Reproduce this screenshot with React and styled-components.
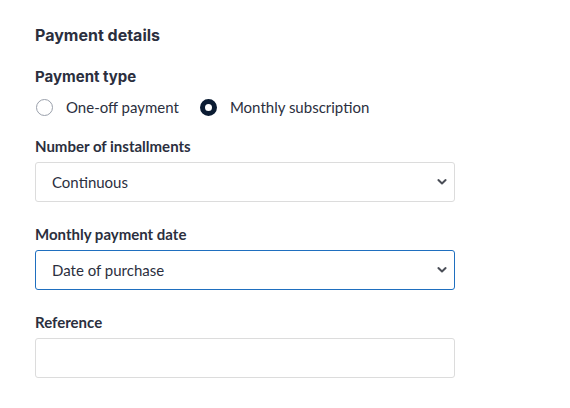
import React from "react";
import styled, { createGlobalStyle } from "styled-components";

const GlobalStyle = createGlobalStyle`
	body {
		margin: 0;
		background: #ffffff;
		font-family: "Lato", "Liberation Sans", sans-serif;
		color: #2b2f3e;
	}
`;

const Form = styled.form`
	width: 420px;
	padding: 25px 0 0 35px;
	display: flex;
	flex-direction: column;
`;

const Title = styled.h2`
	margin: 0 0 22px;
	font-family: "Inter", "Liberation Sans", sans-serif;
	font-size: 16px;
	font-weight: 650;
	line-height: 20px;
	color: #2b2f3e;
`;

const Field = styled.div`
	display: flex;
	flex-direction: column;
	margin-bottom: ${(p) => p.$gap || 24}px;
`;

const GroupLabel = styled.div`
	font-family: "Inter", "Liberation Sans", sans-serif;
	font-size: 15px;
	font-weight: 650;
	line-height: 20px;
	margin-bottom: 10px;
`;

const Label = styled.label`
	font-size: 15px;
	font-weight: 700;
	line-height: 20px;
	margin-bottom: 6px;
`;

const RadioRow = styled.div`
	display: flex;
	align-items: center;
	gap: 20px;
`;

const RadioOption = styled.label`
	display: flex;
	align-items: center;
	gap: 13px;
	font-size: 15px;
	line-height: 20px;
	cursor: pointer;
`;

const RadioDot = styled.span`
	width: 17px;
	height: 17px;
	border-radius: 50%;
	box-sizing: border-box;
	border: ${(p) => (p.$checked ? "5.5px solid #0b1c33" : "1px solid #9aa0ab")};
	background: #ffffff;
	margin-left: 1px;
`;

const SelectWrap = styled.div`
	position: relative;
	width: 100%;

	svg {
		position: absolute;
		right: 8px;
		top: 50%;
		transform: translateY(-50%);
		pointer-events: none;
	}
`;

const Select = styled.select`
	appearance: none;
	height: 40px;
	width: 100%;
	box-sizing: border-box;
	padding: 0 28px 0 16px;
	border: 1px solid ${(p) => (p.$focused ? "#1f6fbf" : "#dcdcdc")};
	border-radius: 3px;
	background: #ffffff;
	font-family: "Lato", "Liberation Sans", sans-serif;
	font-size: 15px;
	color: #2b2f3e;
	outline: none;
`;

const TextInput = styled.input`
	height: 40px;
	width: 100%;
	box-sizing: border-box;
	padding: 0 16px;
	border: 1px solid #dcdcdc;
	border-radius: 3px;
	font-family: "Lato", "Liberation Sans", sans-serif;
	font-size: 15px;
	outline: none;
`;

const Chevron = () => (
	<svg width="10" height="7" viewBox="0 0 10 7" aria-hidden="true">
		<path d="M1.4 1.6 L5 5 L8.6 1.6" fill="none" stroke="#4a4e57" strokeWidth="2" strokeLinecap="round" strokeLinejoin="round" />
	</svg>
);

const Dropdown = ({ focused, value, children }) => (
	<SelectWrap>
		<Select $focused={focused} defaultValue={value}>
			{children}
		</Select>
		<Chevron />
	</SelectWrap>
);

export default function App() {
	return (
		<>
			<GlobalStyle />
			<Form>
				<Title>Payment details</Title>
				<Field $gap={19}>
					<GroupLabel>Payment type</GroupLabel>
					<RadioRow>
						<RadioOption>
							<RadioDot />
							One-off payment
						</RadioOption>
						<RadioOption>
							<RadioDot $checked />
							Monthly subscription
						</RadioOption>
					</RadioRow>
				</Field>
				<Field $gap={22}>
					<Label>Number of installments</Label>
					<Dropdown value="continuous">
						<option value="continuous">Continuous</option>
					</Dropdown>
				</Field>
				<Field $gap={22}>
					<Label>Monthly payment date</Label>
					<Dropdown focused value="purchase">
						<option value="purchase">Date of purchase</option>
					</Dropdown>
				</Field>
				<Field>
					<Label>Reference</Label>
					<TextInput type="text" />
				</Field>
			</Form>
		</>
	);
}
